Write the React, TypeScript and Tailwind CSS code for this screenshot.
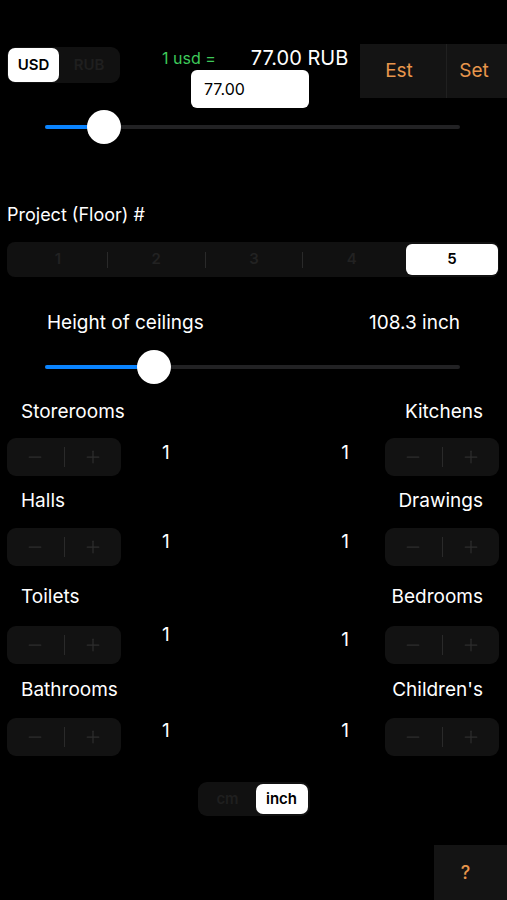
import { Minus, Plus } from 'lucide-react'

const ORANGE = 'text-[#e8964c]'

type Room = {
  left: string
  right: string
  labelGap: string
  stepGap: string
  leftValueTop: string
  rightValueTop: string
}

const rooms: Room[] = [
  { left: 'Storerooms', right: 'Kitchens', labelGap: 'mt-[17px]', stepGap: 'mt-[15px]', leftValueTop: 'mt-[4px]', rightValueTop: 'mt-[4px]' },
  { left: 'Halls', right: 'Drawings', labelGap: 'mt-[14px]', stepGap: 'mt-[16px]', leftValueTop: 'mt-[3px]', rightValueTop: 'mt-[3px]' },
  { left: 'Toilets', right: 'Bedrooms', labelGap: 'mt-[20px]', stepGap: 'mt-[18px]', leftValueTop: 'mt-[-2px]', rightValueTop: 'mt-[3px]' },
  { left: 'Bathrooms', right: "Children's", labelGap: 'mt-[15px]', stepGap: 'mt-[17px]', leftValueTop: 'mt-[2px]', rightValueTop: 'mt-[2px]' },
]

function Slider({ value }: { value: number }) {
  // value = thumb centre offset in px from the track start
  return (
    <div className="relative ml-[45px] h-[34px] w-[415px]">
      <div className="absolute left-0 right-0 top-[15px] h-[4px] rounded-full bg-[#222224]" />
      <div
        className="absolute left-0 top-[15px] h-[4px] rounded-full bg-[#0a84ff]"
        style={{ width: value }}
      />
      <div
        className="absolute top-0 h-[34px] w-[34px] rounded-full bg-white shadow-md"
        style={{ left: value - 17 }}
      />
    </div>
  )
}

function Stepper() {
  return (
    <div className="flex h-[38px] w-[114px] items-center rounded-[9px] bg-[#121212]">
      <div className="flex flex-1 justify-center">
        <Minus size={20} strokeWidth={1.5} className="text-[#2e2e2e]" />
      </div>
      <div className="h-[20px] w-px bg-[#2a2a2a]" />
      <div className="flex flex-1 justify-center">
        <Plus size={20} strokeWidth={1.5} className="text-[#2e2e2e]" />
      </div>
    </div>
  )
}

export default function App() {
  const floors = [1, 2, 3, 4, 5]
  const selectedFloor = 5

  return (
    <div className="flex h-[900px] w-[507px] flex-col overflow-hidden bg-black pt-[44px] font-['Inter',sans-serif] text-white">
      {/* currency row */}
      <div className="flex h-[64px] items-start">
        <div className="ml-[7px] mt-[3px] flex h-[36px] w-[113px] rounded-[9px] bg-[#111111] p-[1px]">
          <div className="flex w-[51px] items-center justify-center rounded-[7px] bg-white text-[15px] font-semibold text-black">
            USD
          </div>
          <div className="flex flex-1 items-center justify-center text-[15px] font-semibold text-[#1f1f1f]">
            RUB
          </div>
        </div>

        <div className="ml-[42px] mt-[3px] flex flex-col">
          <div className="flex h-[22px] items-center leading-[22px]">
            <span className="text-[16px] text-[#3ec95a]">1 usd =</span>
            <span className="ml-[35px] text-[20px]">77.00 RUB</span>
          </div>
          <div className="ml-[29px] mt-[1px] flex h-[38px] w-[118px] items-center rounded-[6px] bg-white pl-[13px] text-[16px] text-black">
            77.00
          </div>
        </div>

        <div className="ml-auto flex h-[54px] w-[147px] bg-[#141414]">
          <div className={`flex w-[86px] items-center justify-center pr-[8px] text-[19px] ${ORANGE}`}>Est</div>
          <div className="w-px bg-[#202020]" />
          <div className={`flex flex-1 items-center justify-center pr-[6px] text-[19px] ${ORANGE}`}>Set</div>
        </div>
      </div>

      <div className="mt-[2px]">
        <Slider value={59} />
      </div>

      {/* floors */}
      <div className="ml-[7px] mt-[60px] text-[18px] leading-[22px]">Project (Floor) #</div>
      <div className="ml-[7px] mt-[16px] flex h-[35px] w-[492px] items-center rounded-[8px] bg-[#111111] p-[2px] pr-[1px]">
        {floors.map((f, i) => (
          <div key={f} className="flex h-full flex-1 items-center">
            {i > 0 && f !== selectedFloor && f - 1 !== selectedFloor && (
              <div className="h-[16px] w-px bg-[#2a2a2a]" />
            )}
            <div
              className={
                f === selectedFloor
                  ? 'ml-[6px] flex h-full flex-1 items-center justify-center rounded-[6px] bg-white text-[15px] font-semibold text-black'
                  : 'flex h-full flex-1 items-center justify-center text-[15px] font-semibold text-[#222222]'
              }
            >
              {f}
            </div>
          </div>
        ))}
      </div>

      {/* ceilings */}
      <div className="mt-[35px] flex h-[22px] items-center justify-between pl-[47px] pr-[47px] text-[19px] leading-[22px]">
        <span>Height of ceilings</span>
        <span>108.3 inch</span>
      </div>
      <div className="mt-[16px]">
        <Slider value={109} />
      </div>

      {/* rooms */}
      {rooms.map((r) => (
        <div key={r.left} className="flex flex-col">
          <div className={`${r.labelGap} flex h-[22px] items-center justify-between pl-[21px] pr-[24px] text-[19px] leading-[22px]`}>
            <span>{r.left}</span>
            <span>{r.right}</span>
          </div>
          <div className={`${r.stepGap} flex h-[38px] items-start pl-[7px] pr-[8px]`}>
            <Stepper />
            <span className={`${r.leftValueTop} ml-[41px] text-[19px] leading-[22px]`}>1</span>
            <span className={`${r.rightValueTop} ml-auto mr-[36px] text-[19px] leading-[22px]`}>1</span>
            <Stepper />
          </div>
        </div>
      ))}

      {/* units */}
      <div className="mx-auto mt-[26px] flex h-[34px] w-[112px] rounded-[9px] bg-[#111111] p-[2px]">
        <div className="flex flex-1 items-center justify-center text-[15px] font-semibold text-[#1f1f1f]">
          cm
        </div>
        <div className="flex w-[52px] items-center justify-center rounded-[7px] bg-white text-[15px] font-semibold text-black">
          inch
        </div>
      </div>

      <div className="mt-[29px] flex justify-end">
        <div className={`flex h-[55px] w-[73px] items-center justify-center bg-[#141414] pr-[10px] text-[18px] font-medium ${ORANGE}`}>
          ?
        </div>
      </div>
    </div>
  )
}
